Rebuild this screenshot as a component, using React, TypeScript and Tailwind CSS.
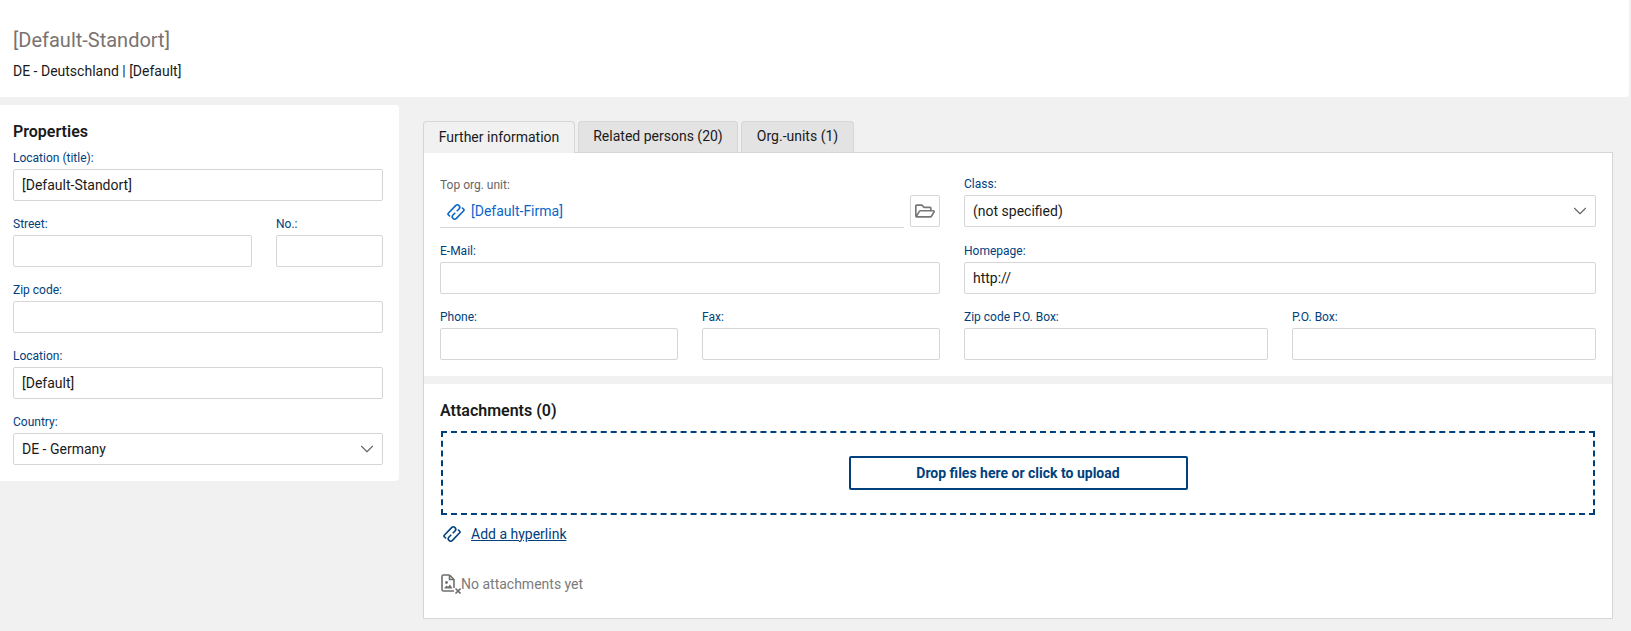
import { FaRegFolderOpen } from "react-icons/fa"
import { ChevronDown } from "lucide-react"

const labelClass = "mb-[2px] block h-[18px] text-[12px] leading-[18px] text-[#00417d]"
const inputClass = "block h-[32px] w-full rounded-[2px] border border-[#d6d6d6] bg-white px-2 text-[14px] leading-[30px] text-[#1a1a1a]"

function Field({ label, value, className = "" }: { label: string; value?: string; className?: string }) {
  return (
    <div className={className}>
      <label className={labelClass}>{label}</label>
      <div className={inputClass}>{value}</div>
    </div>
  )
}

function SelectField({ label, value, className = "" }: { label: string; value: string; className?: string }) {
  return (
    <div className={className}>
      <label className={labelClass}>{label}</label>
      <div className={`${inputClass} flex items-center justify-between`}>
        <span>{value}</span>
        <ChevronDown className="mr-[-4px] h-[22px] w-[22px] text-[#666]" strokeWidth={1.2} />
      </div>
    </div>
  )
}

function LinkIcon({ className = "" }: { className?: string }) {
  return (
    <svg className={className} viewBox="0 0 18 18" fill="none" stroke="currentColor" strokeWidth="1.6" strokeLinecap="round">
      <path d="M2.6 13 1.3 11.7a1 1 0 0 1 0-1.4L8.6 2.6a2.4 2.4 0 0 1 3.4 3.4L10.2 7.8" />
      <path d="M15.4 5l1.3 1.3a1 1 0 0 1 0 1.4L9.4 15.4a2.4 2.4 0 0 1-3.4-3.4l1.8-1.8" />
    </svg>
  )
}

function NoFileIcon() {
  return (
    <svg className="h-[20px] w-[20px] shrink-0" viewBox="0 0 20 20" fill="none">
      <path d="M8.5 1H2.5A1.5 1.5 0 0 0 1 2.5v13A1.5 1.5 0 0 0 2.5 17H13M8.5 1l4.5 4.5V14M8.5 1v4.5H13" stroke="#6f6f6f" strokeWidth="1.6" />
      <circle cx="5.5" cy="8.5" r="1.4" fill="#6f6f6f" />
      <path d="M3 14.5l2.5-3 1.5 1.2 2-2.2 2.5 4z" fill="#6f6f6f" />
      <path d="M14.5 14.5l5 5m0-5-5 5" stroke="#6f6f6f" strokeWidth="1.6" />
    </svg>
  )
}

export default function App() {
  return (
    <div className="min-h-[631px] bg-[#f1f1f1] font-['Roboto',sans-serif] text-[14px]">
      {/* Header */}
      <div className="mr-[2px] h-[97px] rounded-br-[4px] bg-white pl-[13px] pt-[28px]">
        <h1 className="text-[20px] leading-[24px] text-[#7a7370]">[Default-Standort]</h1>
        <p className="mt-[10px] text-[14px] leading-[18px] text-[#1a1a1a]">DE - Deutschland | [Default]</p>
      </div>

      <div className="flex items-start pt-[8px]">
        {/* Properties */}
        <div className="h-[376px] w-[399px] shrink-0 rounded-r-[4px] bg-white pl-[13px] pr-[16px] pt-[18px]">
          <h2 className="h-[18px] text-[16px] font-semibold leading-[18px] text-[#1a1a1a]">Properties</h2>
          <div className="mt-[8px] flex flex-col gap-[14px]">
            <Field label="Location (title):" value="[Default-Standort]" />
            <div className="flex gap-[24px]">
              <Field label="Street:" className="w-[239px]" />
              <Field label="No.:" className="flex-1" />
            </div>
            <Field label="Zip code:" />
            <Field label="Location:" value="[Default]" />
            <SelectField label="Country:" value="DE - Germany" />
          </div>
        </div>

        {/* Tabs and panel */}
        <div className="ml-[24px] w-[1190px] pt-[16px]">
          <div className="relative z-10 flex h-[31px] gap-[3px]">
            <div className="h-[32px] w-[152px] rounded-t-[4px] border border-b-0 border-[#d6d6d6] bg-[#f1f1f1] pt-[6px] text-center leading-[18px] text-[#1a1a1a]">Further information</div>
            <div className="h-[31px] w-[160px] rounded-t-[4px] border border-b-0 border-[#d6d6d6] bg-[#e3e3e3] pt-[5px] text-center leading-[18px] text-[#1a1a1a]">Related persons (20)</div>
            <div className="h-[31px] w-[113px] rounded-t-[4px] border border-b-0 border-[#d6d6d6] bg-[#e3e3e3] pt-[5px] text-center leading-[18px] text-[#1a1a1a]">Org.-units (1)</div>
          </div>
          <div className="h-[467px] border border-[#d6d6d6] bg-white">
            <div className="h-[223px] px-[16px] pt-[23px]">
              <div className="grid grid-cols-[500px_632px] gap-x-[24px]">
                <div>
                  <div className="h-[18px] text-[12px] leading-[18px] text-[#666]">Top org. unit:</div>
                  <div className="flex items-start gap-[6px]">
                    <div className="flex h-[34px] flex-1 items-center border-b border-[#d6d6d6] pl-[7px] pt-[2px] text-[#0a66c8]">
                      <LinkIcon className="mr-[6px] h-[18px] w-[18px]" />
                      [Default-Firma]
                    </div>
                    <div className="mt-[1px] flex h-[32px] w-[30px] items-center justify-center rounded-[2px] border border-[#d6d6d6]">
                      <FaRegFolderOpen className="h-[20px] w-[20px] text-[#777]" />
                    </div>
                  </div>
                </div>
                <SelectField label="Class:" value="(not specified)" className="mt-[-1px]" />
              </div>
              <div className="mt-[14px] grid grid-cols-[500px_632px] gap-x-[24px]">
                <Field label="E-Mail:" />
                <Field label="Homepage:" value="http://" />
              </div>
              <div className="mt-[14px] grid grid-cols-[238px_238px_304px_304px] gap-x-[24px]">
                <Field label="Phone:" />
                <Field label="Fax:" />
                <Field label="Zip code P.O. Box:" />
                <Field label="P.O. Box:" />
              </div>
            </div>
            <div className="h-[8px] bg-[#f1f1f1]" />
            <div className="px-[16px] pt-[18px]">
              <h3 className="h-[18px] text-[16px] font-semibold leading-[18px] text-[#1a1a1a]">Attachments (0)</h3>
              <div className="ml-[1px] mr-[1px] mt-[11px] flex h-[84px] items-center justify-center border-2 border-dashed border-[#00417d]">
                <div className="flex h-[34px] w-[339px] items-center justify-center rounded-[2px] border-2 border-[#00417d] text-[14px] font-bold text-[#00417d]">
                  Drop files here or click to upload
                </div>
              </div>
              <div className="mt-[10px] flex h-[18px] items-center pl-[3px] text-[#00417d]">
                <LinkIcon className="h-[18px] w-[18px]" />
                <a className="ml-[10px] underline">Add a hyperlink</a>
              </div>
              <div className="ml-[1px] mt-[31px] flex h-[20px] items-center text-[#7b7b7b]">
                <NoFileIcon />
                <span>No attachments yet</span>
              </div>
            </div>
          </div>
        </div>
      </div>
    </div>
  )
}
